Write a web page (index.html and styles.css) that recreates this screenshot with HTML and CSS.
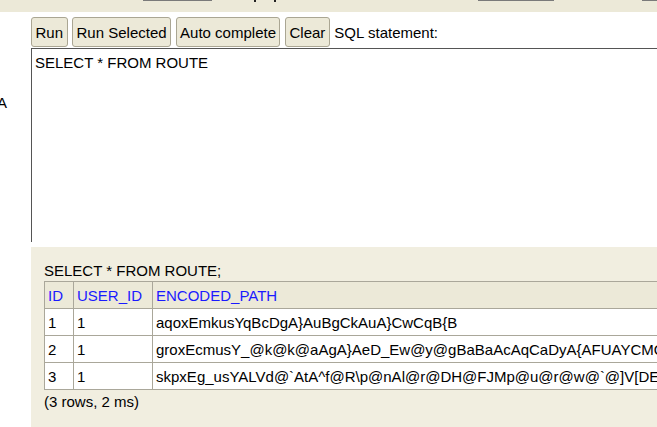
FILE: index.html
```html
<!DOCTYPE html>
<html>
<head>
<meta charset="utf-8">
<link rel="stylesheet" href="styles.css">
</head>
<body>
<div class="topstrip">
  <span class="mark bar1"></span>
  <span class="mark dot dot1"></span>
  <span class="mark dot dot2"></span>
  <span class="mark bar2"></span>
  <span class="mark bar3"></span>
</div>
<div class="layout">
  <div class="side"><span class="side-text">A</span></div>
  <div class="main">
    <div class="toolbar">
      <button class="btn">Run</button>
      <button class="btn">Run Selected</button>
      <button class="btn">Auto complete</button>
      <button class="btn">Clear</button>
      <span class="label">SQL statement:</span>
    </div>
    <div class="editor">SELECT * FROM ROUTE</div>
    <div class="result">
      <div class="query">SELECT * FROM ROUTE;</div>
      <table class="grid">
        <tr><th>ID</th><th>USER_ID</th><th>ENCODED_PATH</th></tr>
        <tr><td>1</td><td>1</td><td>aqoxEmkusYqBcDgA}AuBgCkAuA}CwCqB{B</td></tr>
        <tr><td>2</td><td>1</td><td>groxEcmusY_@k@k@aAgA}AeD_Ew@y@gBaBaAcAqCaDyA{AFUAYCMOe@Wk@SaAQ</td></tr>
        <tr><td>3</td><td>1</td><td>skpxEg_usYALVd@`AtA^f@R\p@nAl@r@DH@FJMp@u@r@w@`@]V[DE@GBm@</td></tr>
      </table>
      <div class="summary">(3 rows, 2 ms)</div>
    </div>
  </div>
</div>
</body>
</html>
```
FILE: styles.css
```css
html, body {
  margin: 0;
  padding: 0;
  width: 657px;
  height: 427px;
  overflow: hidden;
  background: #ffffff;
  font-family: "Liberation Sans", Arial, sans-serif;
  font-size: 15px;
  color: #000;
}

.topstrip {
  height: 12px;
  background: #ece9d8;
  display: flex;
  align-items: flex-start;
}

.mark { display: block; height: 1px; background: #7a7a7a; }
.bar1 { margin-left: 143px; width: 69px; }
.dot { width: 2px; height: 2px; background: #222; }
.dot1 { margin-left: 42px; }
.dot2 { margin-left: 18px; }
.bar2 { margin-left: 202px; width: 76px; }
.bar3 { margin-left: 88px; width: 15px; }

.layout {
  display: flex;
  height: 415px;
}

.side {
  width: 31px;
  flex: none;
  overflow: hidden;
  padding-top: 82px;
  box-sizing: border-box;
}
.side-text {
  display: block;
  margin-left: -3px;
  line-height: 17px;
}

.main {
  flex: 1;
  min-width: 0;
  overflow: hidden;
  display: flex;
  flex-direction: column;
}

.toolbar {
  display: flex;
  align-items: center;
  gap: 4.5px;
  margin-top: 5px;
  height: 30px;
}

.btn {
  height: 30px;
  padding: 0 3.5px;
  border: 1px solid #aaa693;
  border-radius: 3px;
  background: #ece9d8;
  font-family: inherit;
  font-size: 15px;
  color: #000;
  line-height: 17px;
}

.label { line-height: 17px; }

.editor {
  margin-top: 1px;
  height: 194px;
  box-sizing: border-box;
  border-top: 1px solid #555555;
  border-left: 1px solid #555555;
  padding: 5px 3px;
  line-height: 17px;
  white-space: pre;
}

.result {
  margin-top: 5px;
  flex: 1;
  background: #f1eee0;
  padding: 15px 0 0 13px;
  overflow: hidden;
}

.query { line-height: 17px; margin-bottom: 2px; }

.grid {
  border-collapse: collapse;
  white-space: nowrap;
}
.grid th, .grid td {
  border: 1px solid #aaa79a;
  padding: 5px 10px 4px 3px;
  line-height: 17px;
  text-align: left;
  font-weight: normal;
}
.grid th {
  background: #ece9d8;
  color: #1a1aff;
}
.grid td { background: #ffffff; }

.summary { margin-top: 3px; line-height: 17px; }
```
